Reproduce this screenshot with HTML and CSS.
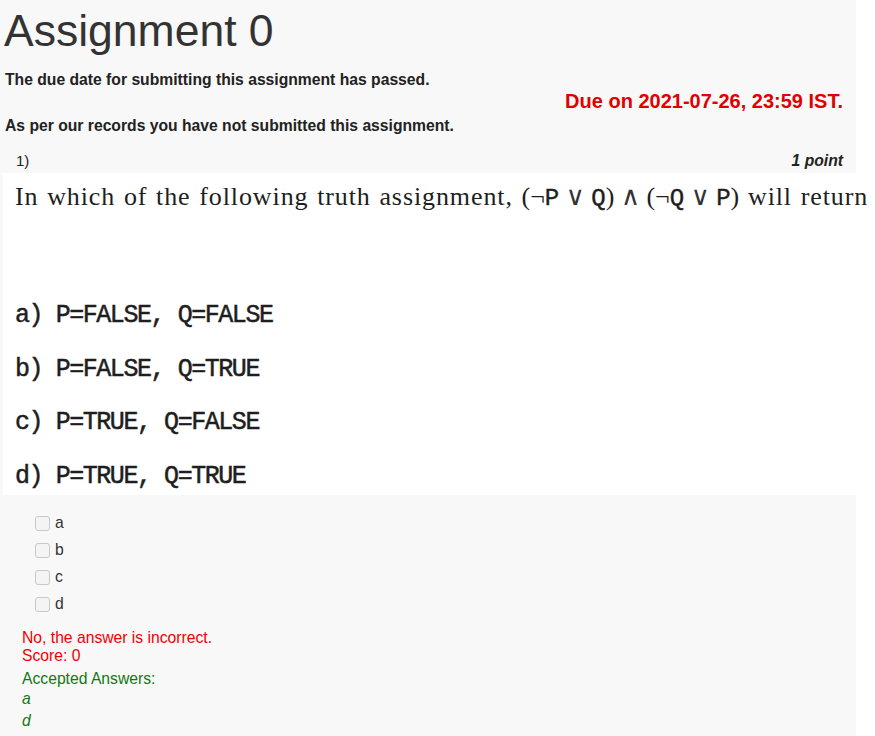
FILE: index.html
```html
<!DOCTYPE html>
<html lang="en">
<head>
<meta charset="utf-8">
<title>Assignment 0</title>
<link rel="stylesheet" href="styles.css">
</head>
<body>
<div class="page">
  <h1 class="title">Assignment 0</h1>
  <p class="notice first">The due date for submitting this assignment has passed.</p>
  <div class="due">Due on 2021-07-26, 23:59 IST.</div>
  <p class="notice">As per our records you have not submitted this assignment.</p>

  <div class="qhead">
    <span class="qnum">1)</span>
    <span class="points">1 point</span>
  </div>

  <div class="qimage">
    <div class="qtext">In which of the following truth assignment, <span class="math">(¬<span class="tt">P</span> <span class="op">∨</span> <span class="tt">Q</span>) <span class="op">∧</span> (¬<span class="tt">Q</span> <span class="op">∨</span> <span class="tt">P</span>)</span> will return</div>
    <div class="opts">
      <div class="opt">a) P=FALSE, Q=FALSE</div>
      <div class="opt">b) P=FALSE, Q=TRUE</div>
      <div class="opt">c) P=TRUE, Q=FALSE</div>
      <div class="opt">d) P=TRUE, Q=TRUE</div>
    </div>
  </div>

  <ul class="choices">
    <li><label class="choice"><input type="checkbox" class="box"><span>a</span></label></li>
    <li><label class="choice"><input type="checkbox" class="box"><span>b</span></label></li>
    <li><label class="choice"><input type="checkbox" class="box"><span>c</span></label></li>
    <li><label class="choice"><input type="checkbox" class="box"><span>d</span></label></li>
  </ul>

  <div class="feedback">
    <div class="wrong">No, the answer is incorrect.<br>Score: 0</div>
    <div class="accepted">
      <div class="acc-title">Accepted Answers:</div>
      <div class="acc-item">a</div>
      <div class="acc-item second">d</div>
    </div>
  </div>
</div>
</body>
</html>
```

FILE: styles.css
```css
html, body {
  margin: 0;
  padding: 0;
  background: #ffffff;
  overflow: hidden;
}

.page {
  width: 856px;
  min-height: 736px;
  background: #f8f8f8;
  font-family: "Liberation Sans", Arial, sans-serif;
  color: #333333;
  font-size: 15.7px;
  line-height: 18px;
}

.title {
  margin: 0;
  padding: 6px 0 0 4px;
  font-size: 44.5px;
  line-height: 50px;
  font-weight: normal;
  color: #333333;
}

.notice {
  margin: 0;
  padding-left: 5px;
  font-weight: bold;
  color: #222222;
}

.notice.first {
  margin-top: 15px;
}

.due {
  margin-top: 1px;
  padding-right: 13px;
  text-align: right;
  font-size: 20px;
  line-height: 22px;
  font-weight: bold;
  color: #e00000;
}

.due + .notice {
  margin-top: 5px;
}

.qhead {
  margin-top: 17px;
  padding: 0 13px 0 16px;
  display: flex;
  justify-content: space-between;
  color: #222222;
}

.qnum {
  font-size: 15px;
}

.points {
  font-weight: bold;
  font-style: italic;
}

.qimage {
  margin: 3px 0 0 3px;
  width: 872px;
  height: 322px;
  background: #ffffff;
  color: #1e1e1e;
  box-sizing: border-box;
  padding: 7px 0 0 12px;
}

.qtext {
  height: 34px;
  font-family: "Liberation Serif", "Times New Roman", serif;
  font-size: 26px;
  line-height: 34px;
  letter-spacing: 0.9px;
  word-spacing: 1.3px;
  white-space: nowrap;
}

.math {
  letter-spacing: 0;
  word-spacing: 0;
}

.op {
  font-family: "DejaVu Serif", serif;
  font-size: 26px;
  line-height: 0;
  color: #333333;
}

.tt {
  font-family: "Liberation Mono", monospace;
  font-size: 24px;
  line-height: 0;
  -webkit-text-stroke: 0.4px #1e1e1e;
}

.opts {
  margin-top: 87px;
  display: flex;
  flex-direction: column;
  gap: 23.7px;
}

.opt {
  font-family: "Liberation Mono", "Courier New", monospace;
  font-size: 25px;
  line-height: 30px;
  letter-spacing: -1.45px;
  white-space: pre;
  color: #1e1e1e;
  -webkit-text-stroke: 0.5px #1e1e1e;
}

.choices {
  list-style: none;
  margin: 19px 0 0 0;
  padding: 0 0 0 35px;
  display: flex;
  flex-direction: column;
  gap: 9px;
}

.choice {
  display: flex;
  align-items: center;
  gap: 5px;
  height: 18px;
  color: #333333;
}

.box {
  appearance: none;
  -webkit-appearance: none;
  margin: 0;
  width: 15px;
  height: 15px;
  border: 1px solid #c9c9c9;
  border-radius: 3px;
  background: #f4f4f4;
  box-sizing: border-box;
}

.feedback {
  padding-left: 22px;
  margin-top: 16px;
}

.wrong {
  color: #f00000;
  line-height: 17.5px;
}

.accepted {
  margin-top: 6px;
  color: #127812;
}

.acc-item {
  font-style: italic;
  margin-top: 2px;
}

.acc-item.second {
  margin-top: 4px;
}
```
